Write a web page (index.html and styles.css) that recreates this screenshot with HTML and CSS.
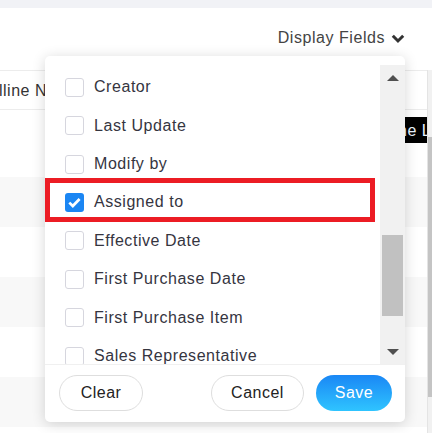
FILE: index.html
```html
<!DOCTYPE html>
<html>
<head>
<meta charset="utf-8">
<link rel="stylesheet" href="styles.css">
</head>
<body>
<div class="topbar"></div>
<div class="toolbar">
  <span class="fields-toggle">Display Fields
    <svg class="chev" width="14" height="10" viewBox="0 0 14 10"><path d="M1.8 1.8 L7 7 L12.2 1.8" fill="none" stroke="#333" stroke-width="3"/></svg>
  </span>
</div>
<div class="table-wrap">
  <div class="table">
    <div class="thead"><span class="th-text">lline N</span></div>
    <div class="row first"><span class="tag">ne L</span></div>
    <div class="row alt"></div>
    <div class="row"></div>
    <div class="row alt"></div>
    <div class="row"></div>
    <div class="row alt"></div>
  </div>
  <div class="vscroll"><div class="vthumb"></div></div>
</div>

<div class="panel">
  <div class="list-area">
    <div class="list">
      <label class="item"><span class="box"></span><span>Creator</span></label>
      <label class="item"><span class="box"></span><span>Last Update</span></label>
      <label class="item"><span class="box"></span><span>Modify by</span></label>
      <label class="item"><span class="box checked"><svg width="19" height="19" viewBox="0 0 19 19"><path d="M4.3 9.6 L7.8 13 L14.6 6" fill="none" stroke="#fff" stroke-width="2.7"/></svg></span><span>Assigned to</span></label>
      <label class="item"><span class="box"></span><span>Effective Date</span></label>
      <label class="item"><span class="box"></span><span>First Purchase Date</span></label>
      <label class="item"><span class="box"></span><span>First Purchase Item</span></label>
      <label class="item"><span class="box"></span><span>Sales Representative</span></label>
    </div>
    <div class="sbar">
      <div class="sarrow up"></div>
      <div class="strack"><div class="sthumb"></div></div>
      <div class="sarrow down"></div>
    </div>
  </div>
  <div class="footer">
    <button class="btn clear">Clear</button>
    <div class="right-btns">
      <button class="btn">Cancel</button>
      <button class="btn primary">Save</button>
    </div>
  </div>
  <div class="highlight"></div>
</div>
</body>
</html>
```
FILE: styles.css
```css
* { box-sizing: border-box; }
html, body { margin: 0; padding: 0; }
body {
  width: 432px;
  height: 433px;
  overflow: hidden;
  background: #fff;
  font-family: "Liberation Sans", Arial, sans-serif;
  color: #333;
  position: relative;
}
.topbar {
  height: 8px;
  background: #f1f2f6;
}
.toolbar {
  height: 62px;
  display: flex;
  justify-content: flex-end;
  padding: 20px 27px 0 0;
}
.fields-toggle {
  font-size: 16px;
  letter-spacing: 0.55px;
  color: #444;
  display: flex;
  align-items: center;
  gap: 6px;
  height: 20px;
}
.chev { margin-top: 1px; }
.table-wrap {
  display: flex;
  height: 363px;
}
.table { flex: 1; overflow: hidden; }
.thead {
  height: 40px;
  border-top: 1px solid #ececec;
  border-bottom: 1px solid #ececec;
  display: flex;
  align-items: center;
  font-size: 16px;
  letter-spacing: 0.5px;
  color: #333;
  padding: 2px 0 0 0;
}
.th-text { margin-left: -1px; }
.row { height: 50px; background: #fff; position: relative; }
.row.first { height: 67px; }
.row.alt { background: #f8f8f8; }
.tag {
  position: absolute;
  right: 0;
  top: 7px;
  width: 32px;
  height: 26px;
  background: #000;
  color: #eaf4ff;
  font-size: 16px;
  letter-spacing: 0.5px;
  line-height: 27px;
  padding-left: 3px;
  white-space: nowrap;
  overflow: hidden;
}
.vscroll {
  width: 5px;
  background: #f1f1f1;
  border-left: 1px solid #e4e4e4;
  padding-top: 67px;
}
.vthumb { height: 260px; background: #c4c4c4; }

.panel {
  position: absolute;
  left: 45px;
  top: 56px;
  width: 360px;
  height: 366px;
  background: #fff;
  border-radius: 5px;
  box-shadow: 0 2px 14px rgba(0,0,0,0.16);
  display: flex;
  flex-direction: column;
}
.list-area {
  display: flex;
  height: 309px;
  padding-top: 9px;
  border-bottom: 1px solid #f0f0f0;
}
.list {
  flex: 1;
  overflow: hidden;
  padding: 3px 0 0 20px;
}
.item {
  height: 38.43px;
  display: flex;
  align-items: center;
  gap: 10px;
  font-size: 16px;
  color: #35353f;
  letter-spacing: 0.55px;
}
.box {
  width: 19px;
  height: 19px;
  border: 1px solid #d6d6de;
  border-radius: 3px;
  flex: none;
  background: #fff;
}
.box.checked {
  border: none;
  background: #1b86f3;
}
.box.checked svg { display: block; }
.sbar {
  width: 25px;
  background: #f1f1f1;
  display: flex;
  flex-direction: column;
}
.sarrow {
  height: 25px;
  display: flex;
  align-items: center;
  justify-content: center;
}
.sarrow.up::before {
  content: "";
  border-left: 6px solid transparent;
  border-right: 6px solid transparent;
  border-bottom: 6px solid #505050;
}
.sarrow.down::before {
  content: "";
  border-left: 6px solid transparent;
  border-right: 6px solid transparent;
  border-top: 6px solid #505050;
}
.strack { flex: 1; padding: 145px 2px 0 2px; }
.sthumb { height: 81px; background: #c1c1c1; }

.footer {
  flex: 1;
  display: flex;
  justify-content: space-between;
  align-items: flex-start;
  padding: 10px 13px 0 14px;
}
.right-btns { display: flex; gap: 12px; }
.btn {
  height: 36px;
  border-radius: 18px;
  border: 1px solid #dedede;
  background: #fff;
  font-family: "Liberation Sans", Arial, sans-serif;
  font-size: 16px;
  letter-spacing: 0.5px;
  color: #222;
  padding: 0;
  width: 93px;
}
.btn.clear { width: 84px; }
.btn.primary {
  width: 76px;
  border: none;
  color: #fff;
  background: linear-gradient(180deg, #1a87f5 0%, #2fc4ff 100%);
}
.highlight {
  position: absolute;
  left: 0;
  top: 122px;
  width: 330px;
  height: 44px;
  border: 5px solid #ec1c24;
  pointer-events: none;
}
```
